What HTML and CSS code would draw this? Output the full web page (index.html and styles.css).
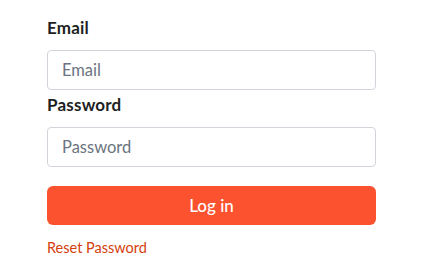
FILE: index.html
```html
<!DOCTYPE html>
<html lang="en">
<head>
<meta charset="utf-8">
<title>Log in</title>
<link rel="stylesheet" href="styles.css">
</head>
<body>
<form class="login">
  <label class="label" for="email">Email</label>
  <input class="input" id="email" type="email" placeholder="Email">
  <label class="label label-second" for="password">Password</label>
  <input class="input" id="password" type="password" placeholder="Password">
  <button class="btn" type="button">Log in</button>
  <a class="link" href="#">Reset Password</a>
</form>
</body>
</html>
```
FILE: styles.css
```css
* { box-sizing: border-box; }
html, body { margin: 0; background: #ffffff; }
body {
  font-family: Lato, "Liberation Sans", sans-serif;
  color: #1f2328;
}
.login {
  display: flex;
  flex-direction: column;
  align-items: flex-start;
  width: 329px;
  margin-left: 47px;
  padding-top: 16px;
}
.label {
  font-size: 17px;
  font-weight: 700;
  line-height: 24px;
  letter-spacing: 0.2px;
  margin-bottom: 10px;
  color: #1d1f23;
}
.label-second { margin-top: 3px; }
.input {
  width: 100%;
  height: 40px;
  border: 1px solid #d1d5db;
  border-radius: 4px;
  padding: 0 14px;
  font-family: inherit;
  font-size: 16.5px;
  color: #1f2328;
  background: #fff;
  outline: none;
}
.input::placeholder { color: #6b7480; }
.btn {
  width: 100%;
  height: 39px;
  margin-top: 19px;
  border: none;
  border-radius: 6px;
  background: #fd5230;
  color: #ffffff;
  font-family: inherit;
  font-size: 17px;
  font-weight: 500;
  cursor: pointer;
}
.link {
  margin-top: 13px;
  font-size: 14.5px;
  line-height: 20px;
  color: #d4400c;
  text-decoration: none;
}
```
